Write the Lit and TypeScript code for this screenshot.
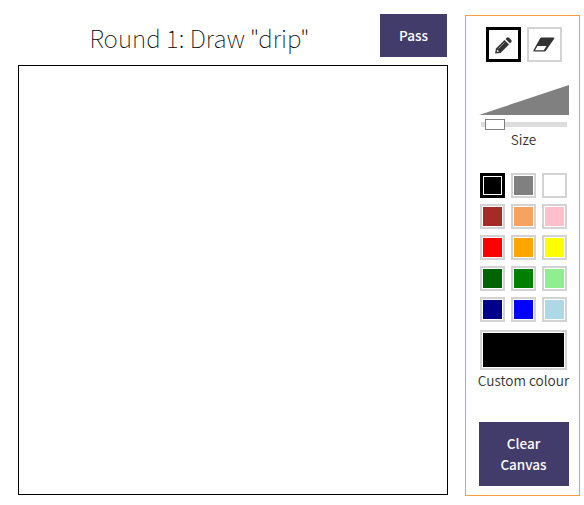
import { LitElement, html, css } from "lit";
import { customElement, state } from "lit/decorators.js";

const COLOURS = [
  "black", "gray", "white",
  "brown", "sandybrown", "pink",
  "red", "orange", "yellow",
  "darkgreen", "green", "lightgreen",
  "darkblue", "blue", "lightblue",
];

@customElement("app-root")
class AppRoot extends LitElement {
  @state() private colour = "black";
  @state() private tool = "pencil";

  static styles = css`
    :host { display: block; height: 505px; background: #fff; color: #333; font-family: "Noto Sans CJK SC", "Noto Sans", sans-serif; overflow: hidden; }
    * { box-sizing: border-box; }
    button { font: inherit; padding: 0; margin: 0; border-radius: 0; cursor: pointer; }
    .page { display: flex; padding: 14px 4px 0 18px; gap: 17px; }
    .main { width: 430px; }
    .head { display: flex; height: 51px; padding-right: 1px; }
    h1 { flex: 1; margin: 0; padding-left: 1px; text-align: center; font-weight: 100; font-size: 24.4px; line-height: 48px; color: #000; }
    .action { background: #413c69; color: #fff; border: 0; font-weight: 500; font-size: 13.5px; line-height: 21px; }
    .pass { width: 67px; height: 43px; }
    .canvas { height: 430px; border: 1px solid #000; }
    .side { width: 115px; height: 481px; margin-top: 1px; border: 1px solid #f99d3e; display: flex; flex-direction: column; align-items: center; padding: 11px 0 0 2px; }
    .tools { display: flex; gap: 6px; }
    .tool { width: 35px; height: 35px; background: #fff; border: 2px solid lightgray; display: block; }
    .tool.on { border: 3px solid #000; }
    .tool svg { display: block; margin: auto; }
    .tool.on svg { position: relative; top: 1px; }
    .wedge { display: block; margin: 23px 0 0; }
    .slider { width: 86px; height: 11px; margin-top: 4px; display: flex; align-items: center; background: linear-gradient(#ddd, #ddd) 0 3px / 86px 5px no-repeat; }
    .thumb { width: 20px; height: 11px; margin-left: 4px; border: 1px solid gray; background: #fff; }
    .label { font-size: 13.6px; line-height: 20px; white-space: nowrap; font-weight: 350; }
    .size { line-height: 18px; margin-bottom: 2px; }
    .swatches { display: grid; grid-template-columns: repeat(3, 25px); gap: 6px; margin-top: 23px; }
    .swatch { height: 25px; border: 2px solid lightgray; padding: 1px; background: #fff; }
    .swatch.on { border: 3px solid #000; padding: 1px; }
    .fill { display: block; width: 100%; height: 100%; }
    .custom { width: 87px; height: 40px; margin-top: 8px; }
    .clear { width: 90px; height: 64px; margin: 32px 0 0; }
  `;

  render() {
    return html`
      <div class="page">
        <div class="main">
          <div class="head"><h1>Round 1: Draw "drip"</h1><button class="action pass">Pass</button></div>
          <div class="canvas"></div>
        </div>
        <div class="side">
          <div class="tools">
            <button class="tool ${this.tool === "pencil" ? "on" : ""}" aria-label="Pencil" @click=${() => (this.tool = "pencil")}>
              <svg width="17" height="17" viewBox="0 0 17 17"><g fill="#333"><path d="M0 16.500 1 11.500 9.500 3 14 7.500 5.500 16 Z"/><path d="M10.500 2 12 .5Q13 0 14 .8L16.300 3Q17 4 16.300 5L15 6.500Z"/></g><path d="M2 12.500 4 14.500 2.500 15 1.800 14.300Z" fill="#fff"/><path d="M3.500 11.500 9.500 5.500" stroke="#fff" stroke-width=".5"/></svg>
            </button>
            <button class="tool ${this.tool === "eraser" ? "on" : ""}" aria-label="Eraser" @click=${() => (this.tool = "eraser")}>
              <svg width="22" height="15" viewBox="0 0 22 15"><path d="M8.500.5H20.500Q22 .5 21 2L13 13.500Q12.500 14.500 11.500 14.500H1Q0 14.500 .6 13L7 1.500Q7.500 .5 8.500 .5Z" fill="#333"/><path d="M4.500 9H13.500L10.800 13.200H2Z" fill="#fff"/></svg>
            </button>
          </div>
          <svg class="wedge" width="90" height="30"><path d="M0 30 90 0V30Z" fill="gray"/></svg>
          <div class="slider"><div class="thumb"></div></div>
          <div class="label size">Size</div>
          <div class="swatches">
            ${COLOURS.map((c) => html`<button class="swatch ${c === this.colour ? "on" : ""}" aria-label=${c} @click=${() => (this.colour = c)}><span class="fill" style="background:${c}"></span></button>`)}
          </div>
          <button class="swatch custom" aria-label="Custom colour"><span class="fill" style="background:#000"></span></button>
          <div class="label">Custom colour</div>
          <button class="action clear">Clear<br />Canvas</button>
        </div>
      </div>
    `;
  }
}
